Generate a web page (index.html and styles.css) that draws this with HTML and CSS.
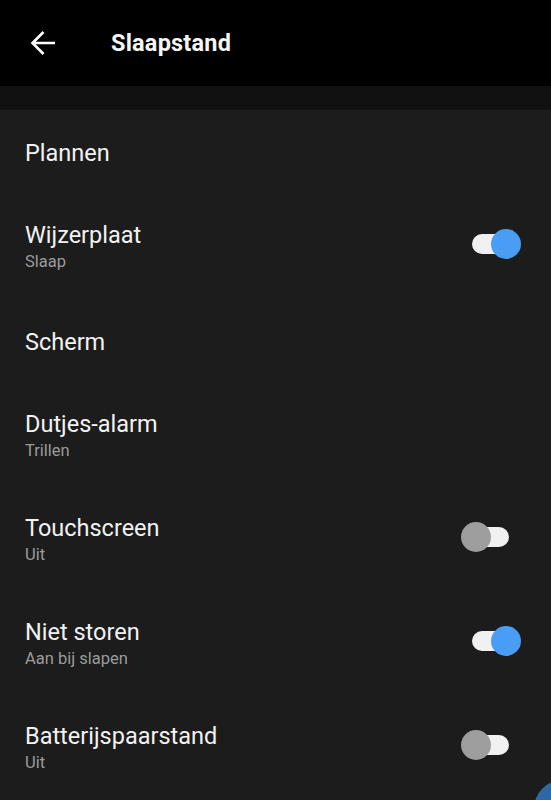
FILE: index.html
```html
<!DOCTYPE html>
<html>
<head>
<meta charset="utf-8">
<link rel="stylesheet" href="styles.css">
</head>
<body>
<div class="app">
  <header class="topbar">
    <svg class="back" width="26" height="26" viewBox="0 0 26 26"><path d="M2.5 13H25M13.5 2L2.5 13L13.5 24" fill="none" stroke="#fff" stroke-width="2.6"/></svg>
    <h1 class="title">Slaapstand</h1>
  </header>
  <div class="strip"></div>
  <main class="list">
    <div class="row single"><div class="text"><div class="label">Plannen</div></div></div>
    <div class="row double">
      <div class="text"><div class="label">Wijzerplaat</div><div class="sub">Slaap</div></div>
      <div class="switch on"><span class="track"></span><span class="thumb"></span></div>
    </div>
    <div class="row single"><div class="text"><div class="label">Scherm</div></div></div>
    <div class="row double">
      <div class="text"><div class="label">Dutjes-alarm</div><div class="sub">Trillen</div></div>
    </div>
    <div class="row double">
      <div class="text"><div class="label">Touchscreen</div><div class="sub">Uit</div></div>
      <div class="switch off"><span class="track"></span><span class="thumb"></span></div>
    </div>
    <div class="row double">
      <div class="text"><div class="label">Niet storen</div><div class="sub">Aan bij slapen</div></div>
      <div class="switch on"><span class="track"></span><span class="thumb"></span></div>
    </div>
    <div class="row double">
      <div class="text"><div class="label">Batterijspaarstand</div><div class="sub">Uit</div></div>
      <div class="switch off"><span class="track"></span><span class="thumb"></span></div>
    </div>
  </main>
  <div class="fab"></div>
</div>
</body>
</html>
```
FILE: styles.css
```css
html, body {
  margin: 0;
  padding: 0;
  background: #1c1c1c;
  font-family: Roboto, "Liberation Sans", sans-serif;
}
.app {
  position: relative;
  width: 551px;
  height: 800px;
  overflow: hidden;
  background: #1c1c1c;
}
.topbar {
  height: 86px;
  background: #000;
  display: flex;
  align-items: center;
}
.back {
  margin-left: 30px;
  flex: none;
}
.title {
  margin: 0 0 0 55px;
  color: #f5f5f5;
  font-size: 23.5px;
  font-weight: 700;
  letter-spacing: 0.2px;
}
.strip {
  height: 24px;
  background: #111111;
}
.list {
  display: flex;
  flex-direction: column;
}
.row {
  display: flex;
  align-items: center;
  justify-content: space-between;
  padding-left: 25px;
  padding-right: 30px;
}
.row.single { height: 85px; }
.row.double { height: 104px; }
.label {
  color: #f2f2f2;
  font-size: 23.5px;
  line-height: 28px;
}
.sub {
  color: #9b9b9b;
  font-size: 16.5px;
  line-height: 22px;
  margin-top: 2px;
}
.switch {
  position: relative;
  width: 60px;
  height: 30px;
  margin-bottom: 6px;
}
.track {
  position: absolute;
  top: 5px;
  height: 20px;
  width: 38px;
  border-radius: 10px;
  background: #f1f1f1;
}
.thumb {
  position: absolute;
  top: 0;
  width: 30px;
  height: 30px;
  border-radius: 50%;
}
.switch.on .track { left: 11px; }
.switch.on .thumb { left: 30px; background: #4a9df5; }
.switch.off .track { left: 10px; }
.switch.off .thumb { left: 0; background: #9e9e9e; }
.switch.off { margin-right: 10px; width: 50px; }
.fab {
  position: absolute;
  left: 535px;
  top: 781px;
  width: 56px;
  height: 56px;
  border-radius: 50%;
  background: #2c67a6;
  box-shadow: 0 0 0 1px #3b6f9c;
}
```
